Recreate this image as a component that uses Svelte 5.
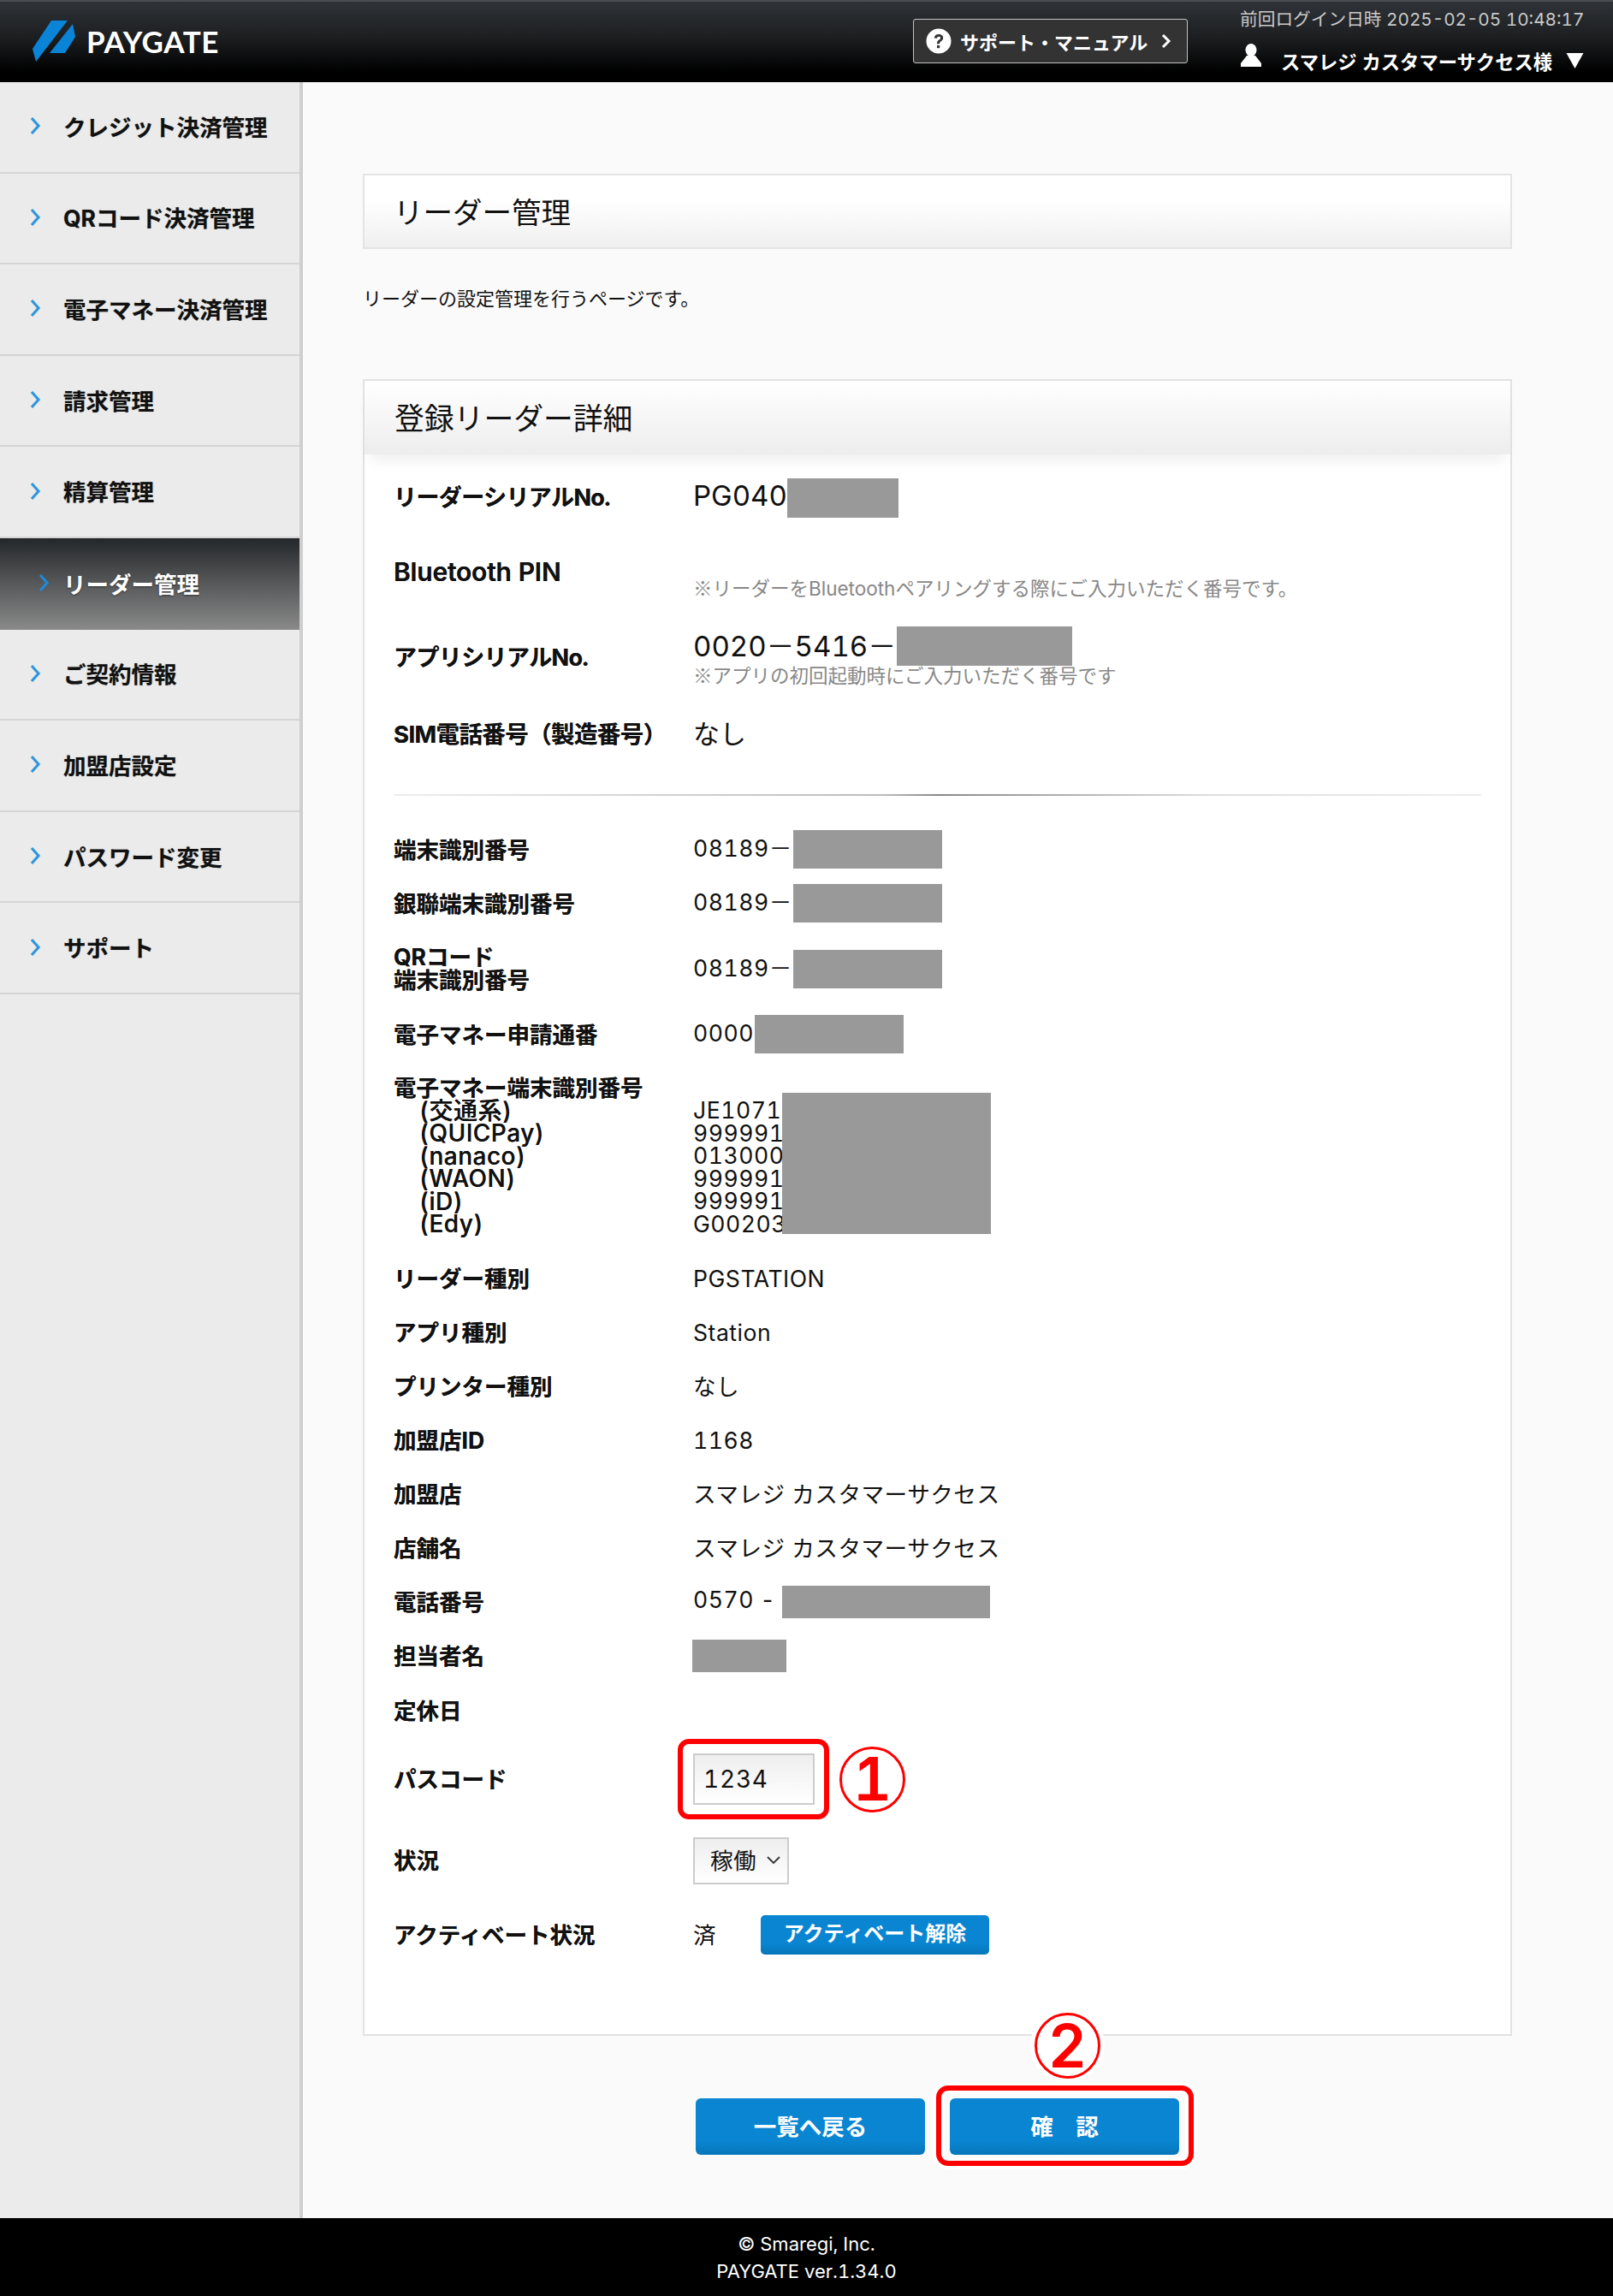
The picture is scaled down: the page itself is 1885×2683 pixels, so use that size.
<script>
  const nav = ['クレジット決済管理','QRコード決済管理','電子マネー決済管理','請求管理','精算管理','リーダー管理','ご契約情報','加盟店設定','パスワード変更','サポート'];
  const plainRows = [
    ['リーダー種別','PGSTATION'],['アプリ種別','Station'],['プリンター種別','なし'],['加盟店ID','1168'],
    ['加盟店','スマレジ カスタマーサクセス'],['店舗名','スマレジ カスタマーサクセス']
  ];
  const subs = ['(交通系)','(QUICPay)','(nanaco)','(WAON)','(iD)','(Edy)'];
  const vals = ['JE10710','999991','013000','999991','999991','G00203'];
</script>

<header class="top">
  <div class="brand">
    <svg class="logo" viewBox="0 0 50 48" aria-hidden="true"><path d="M22 0H41L4 48L0 33Z" fill="#0a84d6"/><path d="M47 4L50 19L38 38H20Z" fill="#0a84d6"/></svg>
    <span class="brandname">PAYGATE</span>
  </div>
  <a class="support" href="#s">
    <svg class="q" viewBox="0 0 30 30" aria-hidden="true"><circle cx="15" cy="15" r="14.5" fill="#fff"/><path d="M9.8 11.5C10 8.4 12.2 7 15 7c3 0 5.2 1.7 5.2 4.3 0 2-1.100 3-2.500 4-1.200.9-1.700 1.400-1.700 3h-3c0-2.600.8-3.500 2.400-4.700 1-.8 1.700-1.300 1.700-2.200 0-1-.8-1.700-2-1.700-1.300 0-2 .8-2.200 2Z" fill="#333"/><rect x="13" y="20" width="3.200" height="3.200" fill="#333"/></svg>
    <span>サポート・マニュアル</span>
    <svg class="sc" viewBox="0 0 12 18" aria-hidden="true"><path d="M2 2l7 7-7 7" fill="none" stroke="#fff" stroke-width="3"/></svg>
  </a>
  <div class="user">
    <div class="last">前回ログイン日時 2025-02-05 10:48:17</div>
    <div class="who">
      <svg class="person" viewBox="0 0 26 28" aria-hidden="true"><ellipse cx="13" cy="7.500" rx="6.500" ry="7.500" fill="#fff"/><path d="M8 14h10l7 9v4H1v-4Z" fill="#fff"/></svg>
      <span class="whoname">スマレジ カスタマーサクセス様</span>
      <svg class="tri" viewBox="0 0 20 18" aria-hidden="true"><path d="M0 0h20L10 18Z" fill="#fff"/></svg>
    </div>
  </div>
</header>

<div class="layout">
  <nav class="side">
    {#each nav as item, i}
      <a class="item" class:active={i === 5} href="#n">
        <svg class="chev" viewBox="0 0 13 22" aria-hidden="true"><path d="M2 2l8 9-8 9" fill="none" stroke="#2f97dc" stroke-width="3.200"/></svg>
        <span>{item}</span>
      </a>
    {/each}
  </nav>

  <main class="main">
    <h1 class="title">リーダー管理</h1>
    <p class="desc">リーダーの設定管理を行うページです。</p>

    <section class="panel">
      <h2 class="phead">登録リーダー詳細</h2>
      <div class="pbody">
        <div class="row r1"><div class="lab">リーダーシリアルNo.</div><div class="big">PG040<i class="red serial"></i></div></div>
        <div class="row r2"><div class="lab">Bluetooth PIN</div><div class="note"><span class="kome">※</span>リーダーをBluetoothペアリングする際にご入力いただく番号です。</div></div>
        <div class="row r3"><div class="lab">アプリシリアルNo.</div><div class="stack"><div class="big">0020－5416－<i class="red app"></i></div><div class="note tight"><span class="kome">※</span>アプリの初回起動時にご入力いただく番号です</div></div></div>
        <div class="row r4"><div class="lab">SIM電話番号（製造番号）</div><div class="big nashi">なし</div></div>
        <hr class="rule" />
        <div class="row"><div class="lab">端末識別番号</div><div>08189－<i class="red term"></i></div></div>
        <div class="row"><div class="lab">銀聯端末識別番号</div><div>08189－<i class="red term"></i></div></div>
        <div class="row r-qr"><div class="lab two">QRコード<br />端末識別番号</div><div>08189－<i class="red term"></i></div></div>
        <div class="row"><div class="lab">電子マネー申請通番</div><div>0000<i class="red term"></i></div></div>
        <div class="row r-em">
          <div class="lab two">電子マネー端末識別番号
            {#each subs as s}<div class="sub">{s}</div>{/each}
          </div>
          <div class="emv">
            {#each vals as v}<div>{v}</div>{/each}
            <i class="red emblock"></i>
          </div>
        </div>
        {#each plainRows as r}
          <div class="row"><div class="lab">{r[0]}</div><div>{r[1]}</div></div>
        {/each}
        <div class="row"><div class="lab">電話番号</div><div>0570 - <i class="red phone"></i></div></div>
        <div class="row"><div class="lab">担当者名</div><div><i class="red mgr"></i></div></div>
        <div class="row"><div class="lab">定休日</div><div></div></div>
        <div class="row r-pass">
          <div class="lab">パスコード</div>
          <div class="passwrap">
            <span class="hl">
              <input class="input" value="1234" aria-label="パスコード" />
            </span>
            <span class="num one">1</span>
          </div>
        </div>
        <div class="row r-status">
          <div class="lab">状況</div>
          <div class="select"><span>稼働</span><svg viewBox="0 0 16 10" aria-hidden="true"><path d="M1 1l7 7 7-7" fill="none" stroke="#333" stroke-width="1.800"/></svg></div>
        </div>
        <div class="row r-act">
          <div class="lab">アクティベート状況</div>
          <div class="actv"><span class="done">済</span><button class="mini">アクティベート解除</button></div>
        </div>
      </div>
    </section>

    <div class="actions">
      <button class="btn">一覧へ戻る</button>
      <div class="confirmwrap">
        <span class="num two-n">2</span>
        <span class="hl2"><button class="btn">確　認</button></span>
      </div>
    </div>
  </main>
</div>

<footer class="foot">
  <div>© Smaregi, Inc.</div>
  <div>PAYGATE ver.1.34.0</div>
</footer>

<style>
  :global(body) { margin: 0; background: #fafafa; }
  :global(#app) { font-family: Inter, "Noto Sans CJK JP", sans-serif; color: #111; font-size: 26.6px; width: 1885px; font-variant-numeric: tabular-nums; }
  * { box-sizing: border-box; }

  .top { height: 96px; display: flex; align-items: stretch; color: #fff; border-top: 2px solid #4a4d50; background: linear-gradient(#2f3337, #1c1e20 45%, #000 88%); }
  .brand { display: flex; align-items: center; flex: none; width: 219px; margin-left: 38px; gap: 13px; padding-bottom: 2px; }
  .logo { width: 50px; height: 48px; flex: none; }
  .brandname { font-family: Lato, sans-serif; font-weight: 700; font-size: 35px; letter-spacing: .6px; }
  .support { flex: none; margin-left: 810px; margin-top: 20px; width: 321px; height: 52px; display: flex; align-items: center; gap: 10px; padding-left: 14px; border: 1.500px solid #c4c4c4; border-radius: 3px; background: #333; color: #fff; text-decoration: none; font-size: 22px; font-weight: 700; }
  .q { width: 30px; height: 30px; }
  .sc { width: 12px; height: 18px; margin-left: 6px; }
  .user { flex: none; margin-left: 61px; width: 436px; padding-top: 7px; }
  .last { font-size: 20.700px; color: #c9c9c9; text-align: right; padding-right: 37px; line-height: 28px; white-space: nowrap; }
  .who { display: flex; align-items: center; margin-top: 18px; }
  .person { width: 26px; height: 28px; margin-right: 22px; margin-top: -12px; }
  .whoname { font-size: 22.300px; font-weight: 700; white-space: nowrap; }
  .tri { width: 21px; height: 18px; margin-left: 16px; }

  .layout { display: flex; }
  .side { width: 354px; min-height: 2496px; background: #ebebeb; border-right: 4px solid #cfcfcf; flex: none; }
  .item { display: flex; align-items: center; height: 106.600px; border-bottom: 2px solid #d4d4d4; padding-left: 35px; gap: 26px; padding-bottom: 2px; color: #111; font-weight: 700; font-size: 26.500px; text-decoration: none; text-shadow: 0 0 1px #888; }
  .chev { width: 13px; height: 22px; flex: none; }
  .active { color: #fff; border: none; background: linear-gradient(#24272a, #8a8a8a); padding-left: 45px; gap: 16px; text-shadow: 0 1px 2px #333; }
  .active .chev path { stroke: #1e8ad6; }

  .main { flex: 1; padding: 107px 118px 0 70px; }
  .title { margin: 0; height: 88px; display: flex; align-items: center; padding: 0 0 3px 34px; font-size: 34.500px; font-weight: 400; background: linear-gradient(#fff, #fff 35%, #efefef); border: 2px solid #e4e4e4; }
  .desc { margin: 40px 0 0; font-size: 22px; line-height: 36px; }
  .panel { margin-top: 76px; height: 1936px; background: #fff; border: 2px solid #e2e2e2; }
  .phead { margin: 0; height: 86px; display: flex; align-items: center; padding: 0 0 2px 35px; font-size: 34.800px; font-weight: 400; background: linear-gradient(#fff, #f9f9f9 35%, #ededed); box-shadow: 0 14px 14px -6px rgba(0,0,0,.06); }
  .pbody { padding: 0 34px; }

  .row { display: grid; grid-template-columns: 350px 1fr; align-items: center; height: 63.100px; line-height: 26px; letter-spacing: .5px; }
  .lab { font-weight: 700; font-size: 26.500px; letter-spacing: 0; white-space: nowrap; text-shadow: 0 0 .5px #333; }
  .two { line-height: 27px; }
  .red { display: inline-block; background: #999; vertical-align: middle; }
  .big { font-size: 33px; letter-spacing: 0; }
  .r1 { height: 102px; }
  .r1 .lab { font-size: 27px; letter-spacing: -.6px; }
  .r2 { height: 84px; align-items: start; padding-top: 20px; }
  .r2 .lab { font-size: 30px; letter-spacing: -.2px; line-height: 30px; font-weight: 600; }
  .r3 { height: 104px; }
  .r3 .lab { font-size: 27px; letter-spacing: -.6px; }
  .r4 { height: 74px; }
  .r4 .lab { font-size: 27.500px; letter-spacing: -.6px; }
  .note { color: #888; font-size: 22.500px; letter-spacing: 0; }
  .kome { font-family: "Noto Sans CJK JP", sans-serif; }
  .r2 .note { padding-top: 18px; line-height: 30px; }
  .tight { line-height: 24px; margin-top: -2px; }
  .stack .big { line-height: 38px; }
  .nashi { font-size: 31px; }
  .serial { width: 130px; height: 46px; margin-left: 0; }
  .app { width: 205px; height: 46px; margin: -6px 0 0 1px; }
  .term { width: 174px; height: 45px; margin: -10px 0 -8px 1px; }
  .rule { margin: 33px 0 31px; height: 2px; border: none; background: linear-gradient(90deg, #eee, #bbb 45%, #888 50%, #ddd 75%, #eee); }
  .r-qr { height: 90px; }
  .r-em { height: 222px; align-items: start; padding-top: 18px; }
  .r-em .two { line-height: 26.500px; }
  .sub { padding-left: 30px; font-weight: 500; font-size: 28px; letter-spacing: .5px; }
  .emv { position: relative; padding-top: 26px; line-height: 26.500px; }
  .emblock { position: absolute; left: 104px; top: 19px; width: 244px; height: 165px; }
  .phone { width: 243px; height: 38px; margin-left: 0; }
  .mgr { width: 110px; height: 38px; margin-left: -1px; }
  .r-pass { height: 98px; }
  .passwrap { display: flex; align-items: center; }
  .hl { position: relative; display: inline-flex; }
  .hl::after { content: ""; position: absolute; inset: -17px -17px -17px -18px; border: 6px solid #f00; border-radius: 13px; pointer-events: none; }
  .input { width: 142px; height: 60px; padding: 0 10px; border: 2px solid #ccc; background: linear-gradient(#eee, #fff); font: inherit; font-size: 28px; letter-spacing: .8px; color: #111; }
  .num { display: inline-flex; align-items: center; justify-content: center; width: 77px; height: 77px; border: 3px solid #f00; border-radius: 50%; color: #f00; font-family: Inter, sans-serif; font-weight: 600; font-size: 70px; line-height: 1; letter-spacing: 0; background: #fff; }
  .one { margin-left: 29px; }
  .r-status { height: 92px; }
  .select { width: 112px; height: 55px; display: flex; align-items: center; justify-content: space-between; padding: 0 8px 0 18px; border: 2px solid #ccc; background: linear-gradient(#eee, #fff); }
  .select svg { width: 16px; height: 10px; }
  .r-act { height: 82px; }
  .actv { display: flex; align-items: center; }
  .done { width: 79px; }
  .mini { width: 267px; height: 46px; padding: 0 0 2px; border: none; border-radius: 5px; background: linear-gradient(#0a85d1, #0a85d1 70%, #0676ba); color: #fff; font: inherit; font-size: 24px; letter-spacing: 0; font-weight: 700; }

  .actions { display: flex; align-items: flex-start; margin-top: 73px; margin-left: 389px; gap: 29px; }
  .btn { width: 268px; height: 66px; padding: 0 0 3px; border: none; border-radius: 6px; background: linear-gradient(#0a85d1, #0a85d1 75%, #0676ba); color: #fff; font: inherit; font-size: 26.500px; font-weight: 700; }
  .confirmwrap { position: relative; }
  .hl2 { position: relative; display: block; }
  .hl2::after { content: ""; position: absolute; inset: -15px -17px -13px -16px; border: 6px solid #f00; border-radius: 14px; box-shadow: 0 0 0 4px #fff, inset 0 0 0 4px #fff; pointer-events: none; }
  .two-n { position: absolute; left: 99px; top: -100px; box-shadow: 0 0 0 5px #fff; }

  .foot { height: 93px; background: #000; color: #fff; text-align: center; font-size: 22px; line-height: 32px; padding-top: 14px; border-bottom: 1px solid #444; }
</style>
